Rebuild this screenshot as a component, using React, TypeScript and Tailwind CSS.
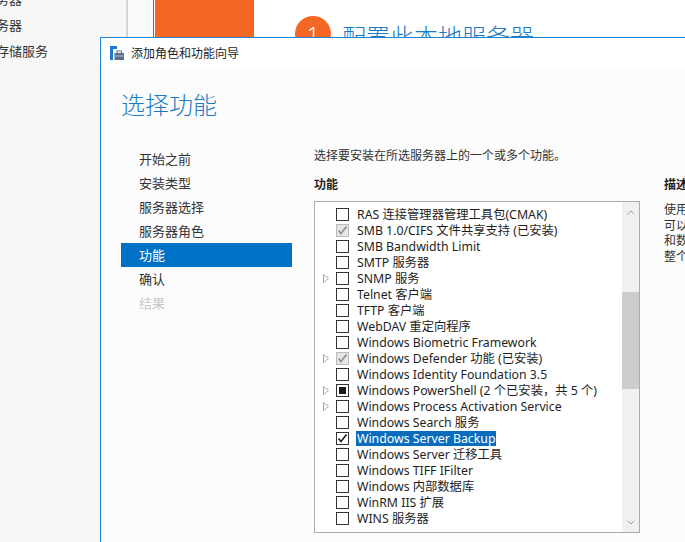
import React from 'react';

type CheckState = 'none' | 'installed' | 'partial' | 'checked';

type Feature = {
  label: string;
  expand?: boolean;
  state?: CheckState;
  selected?: boolean;
};

const features: Feature[] = [
  { label: 'RAS 连接管理器管理工具包(CMAK)' },
  { label: 'SMB 1.0/CIFS 文件共享支持 (已安装)', state: 'installed' },
  { label: 'SMB Bandwidth Limit' },
  { label: 'SMTP 服务器' },
  { label: 'SNMP 服务', expand: true },
  { label: 'Telnet 客户端' },
  { label: 'TFTP 客户端' },
  { label: 'WebDAV 重定向程序' },
  { label: 'Windows Biometric Framework' },
  { label: 'Windows Defender 功能 (已安装)', expand: true, state: 'installed' },
  { label: 'Windows Identity Foundation 3.5' },
  { label: 'Windows PowerShell (2 个已安装，共 5 个)', expand: true, state: 'partial' },
  { label: 'Windows Process Activation Service', expand: true },
  { label: 'Windows Search 服务' },
  { label: 'Windows Server Backup', state: 'checked', selected: true },
  { label: 'Windows Server 迁移工具' },
  { label: 'Windows TIFF IFilter' },
  { label: 'Windows 内部数据库' },
  { label: 'WinRM IIS 扩展' },
  { label: 'WINS 服务器' },
];

const steps = ['开始之前', '安装类型', '服务器选择', '服务器角色', '功能', '确认', '结果'];

const Tick = ({ color }: { color: string }) => (
  <svg width="11" height="11" viewBox="0 0 11 11">
    <polyline points="1.5,5.5 4,8.5 9.5,1.5" fill="none" stroke={color} strokeWidth="1.6" />
  </svg>
);

const Checkbox = ({ state = 'none' }: { state?: CheckState }) => {
  if (state === 'installed') {
    return (
      <span className="w-[13px] h-[13px] shrink-0 border border-[#bcbcbc] bg-[#e6e6e6] flex items-center justify-center">
        <Tick color="#8d8d8d" />
      </span>
    );
  }
  return (
    <span className="w-[13px] h-[13px] shrink-0 border border-[#333333] bg-white flex items-center justify-center">
      {state === 'checked' && <Tick color="#1a1a1a" />}
      {state === 'partial' && <span className="w-[7px] h-[7px] bg-[#1a1a1a]" />}
    </span>
  );
};

const Expander = () => (
  <svg width="6" height="9" viewBox="0 0 6 9">
    <polygon points="0.5,0.5 5.5,4.5 0.5,8.5" fill="none" stroke="#a6a6a6" strokeWidth="1" />
  </svg>
);

const App: React.FC = () => {
  return (
    <div className="relative w-[685px] h-[542px] overflow-hidden bg-white font-['Segoe_UI','Noto_Sans','Noto_Sans_CJK_SC',sans-serif] text-[#1e1e1e]">
      {/* Server Manager behind the wizard */}
      <div className="flex h-full">
        <div className="w-[126px] shrink-0 bg-[#f7f7f7] overflow-hidden">
          <div className="mt-[-14px] ml-[-43px] text-[13px] leading-[26px] text-[#333] whitespace-nowrap font-['Noto_Sans_CJK_SC',sans-serif]">
            <div>本地服务器</div>
            <div>所有服务器</div>
            <div>文件和存储服务</div>
          </div>
        </div>
        <div className="w-[2px] bg-[#d4d4d4]" />
        <div className="w-[25px] bg-[#fafafa]" />
        <div className="w-[1px] bg-[#707070]" />
        <div className="w-[1px] bg-white" />
        <div className="w-[99px] h-[40px] bg-[#f36624]" />
        <div className="flex-1 flex items-start pt-[16px] pl-[41px] gap-[11px]">
          <div className="w-[36px] h-[36px] shrink-0 rounded-full bg-[#f36624] flex items-center justify-center text-white text-[22px] leading-none font-light">
            1
          </div>
          <div className="mt-[5px] text-[24px] leading-[30px] text-[#1a7bc3] font-light whitespace-nowrap font-['Noto_Sans_CJK_SC',sans-serif]">
            配置此本地服务器
          </div>
        </div>
      </div>

      {/* Wizard window */}
      <div className="absolute left-[100px] top-[37px] w-[600px] h-[520px] border-l border-t border-[#1c84d4] bg-[#fcfcfc] flex flex-col">
        <div className="h-[30px] bg-white flex items-center pl-[9px] gap-[6px]">
          <svg width="15" height="15" viewBox="0 0 15 15">
            <rect x="0" y="0" width="3" height="14" fill="#1e7ad1" />
            <rect x="0" y="0" width="7" height="3" fill="#1e7ad1" />
            <rect x="4.5" y="7" width="9.5" height="7" fill="#5c7089" />
            <rect x="7" y="5" width="4.5" height="2.5" fill="none" stroke="#5c7089" strokeWidth="1" />
            <rect x="4.5" y="9.5" width="9.5" height="1" fill="#aebccb" />
          </svg>
          <span className="text-[12px] text-[#1e1e1e] font-['Noto_Sans_CJK_SC',sans-serif]">添加角色和功能向导</span>
        </div>

        <div className="pl-[20px] pt-[20px]">
          <h1 className="h-[32px] text-[24px] leading-[32px] text-[#1a7bc3] font-light font-['Noto_Sans_CJK_SC',sans-serif]">选择功能</h1>
        </div>

        <div className="mt-[27px] flex pl-[20px]">
          {/* step navigation */}
          <div className="w-[171px] shrink-0 flex flex-col text-[13px] font-['Noto_Sans_CJK_SC',sans-serif]">
            {steps.map((s, i) => (
              <div
                key={s}
                className={`h-[24px] leading-[24px] pl-[18px] ${
                  i === 4 ? 'bg-[#0072c6] text-white' : i === 6 ? 'text-[#c8c8c8]' : 'text-[#333]'
                }`}
              >
                {s}
              </div>
            ))}
          </div>
          <div className="ml-[1px] w-[1px] h-[386px] bg-[#c4c4c4]" />

          {/* content */}
          <div className="pl-[21px] flex flex-col">
            <div className="text-[12px] leading-[16px] text-[#333] whitespace-nowrap font-['Noto_Sans_CJK_SC',sans-serif]">
              选择要安装在所选服务器上的一个或多个功能。
            </div>
            <div className="mt-[13px] flex">
              <div className="flex flex-col">
                <div className="text-[12px] leading-[16px] font-bold text-[#1e1e1e] font-['Noto_Sans_CJK_SC',sans-serif]">功能</div>
                <div className="mt-[9px] w-[326px] h-[332px] border border-[#ababab] bg-white flex">
                  <div className="flex-1 pt-[4px] pl-[8px] flex flex-col">
                    {features.map((f) => (
                      <div key={f.label} className="h-[16px] flex items-center">
                        <span className="w-[13px] flex items-center">{f.expand && <Expander />}</span>
                        <Checkbox state={f.state} />
                        <span
                          className={`ml-[7px] px-[1px] text-[12.3px] leading-[15px] whitespace-nowrap ${
                            f.selected ? 'bg-[#0a6cbd] text-white' : ''
                          }`}
                        >
                          {f.label}
                        </span>
                      </div>
                    ))}
                  </div>
                  <div className="w-[17px] bg-[#f0f0f0] flex flex-col items-center">
                    <svg className="mt-[8px]" width="8" height="5" viewBox="0 0 8 5">
                      <polyline points="0.5,4.5 4,1 7.5,4.5" fill="none" stroke="#a0a0a0" strokeWidth="1" />
                    </svg>
                    <div className="mt-[77px] w-full h-[97px] bg-[#cdcdcd]" />
                    <div className="flex-1" />
                    <svg className="mb-[7px]" width="8" height="5" viewBox="0 0 8 5">
                      <polyline points="0.5,0.5 4,4 7.5,0.5" fill="none" stroke="#a0a0a0" strokeWidth="1" />
                    </svg>
                  </div>
                </div>
              </div>
              <div className="ml-[24px] flex flex-col font-['Noto_Sans_CJK_SC',sans-serif]">
                <div className="text-[12px] leading-[16px] font-bold text-[#1e1e1e]">描述</div>
                <div className="mt-[9px] text-[12px] leading-[15.5px] text-[#333] whitespace-nowrap">
                  <div>使用 Windows Server Backup，你</div>
                  <div>可以备份和恢复操作系统、应用程序</div>
                  <div>和数据。可以将备份计划为每天运行一次</div>
                  <div>整个服务器或特定卷。</div>
                </div>
              </div>
            </div>
          </div>
        </div>
      </div>
    </div>
  );
};

export default App;
